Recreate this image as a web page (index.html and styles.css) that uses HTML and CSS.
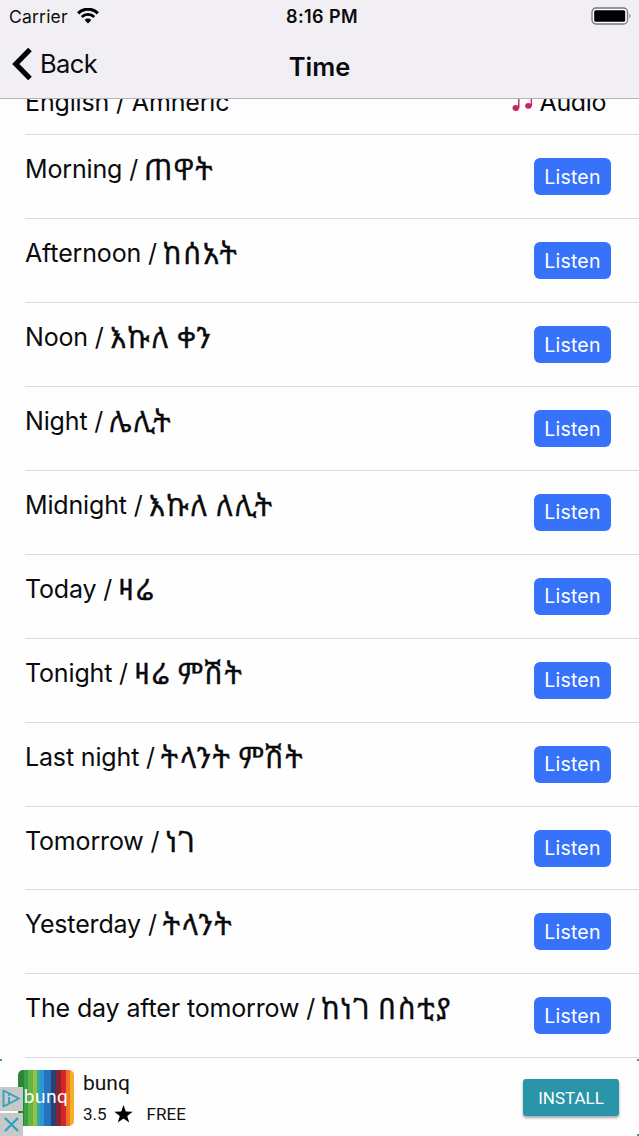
FILE: index.html
```
<!DOCTYPE html>
<html lang="en">
<head>
    <meta charset="UTF-8">
    <meta name="viewport" content="width=device-width, initial-scale=1.0">
    <title>Time</title>
    <link rel="stylesheet" href="styles.css">
</head>
<body>
    <header>
        <div class="status-bar">
            <div class="carrier">
                <span>Carrier</span>
                <svg width="22" height="16" viewBox="0 0 22 16">
                    <path d="M1.2 5.300a13.800 13.800 0 0 1 19.600 0" fill="none" stroke="#000" stroke-width="3.200"/>
                    <path d="M4.800 9a8.800 8.800 0 0 1 12.400 0" fill="none" stroke="#000" stroke-width="2.800"/>
                    <path d="M11 15.400l-3.400-3.400a4.800 4.800 0 0 1 6.800 0z"/>
                </svg>
            </div>
            <div class="clock">8:16 PM</div>
            <div class="battery">
                <svg width="41" height="19" viewBox="0 0 41 19">
                    <rect x="1" y="1" width="35.5" height="16" rx="4" fill="#fff" stroke="#77767a" stroke-width="1.3"/>
                    <rect x="3.2" y="3.2" width="31" height="11.600" rx="1.5"/>
                    <path d="M38.3 6.5q2.4 2.4 0 5z" fill="#77767a"/>
                </svg>
            </div>
        </div>
        <nav class="nav-bar">
            <a class="back">
                <svg width="21" height="34" viewBox="0 0 21 34">
                    <path d="M18 2.500L3.800 17 18 31.500" fill="none" stroke="#000" stroke-width="5.200"/>
                </svg>
                <span>Back</span>
            </a>
            <h1>Time</h1>
        </nav>
    </header>

    <main>
        <ul class="word-list">
            <li class="list-head">
                <span class="english">English / Amheric</span>
                <span class="audio">
                    <svg width="22" height="22" viewBox="0 0 22 22">
                        <path d="M6.800 18V3l12.600-2v15" fill="none" stroke="#c8265e" stroke-width="1.400"/>
                        <ellipse cx="3.800" cy="18" rx="3.300" ry="2.900" fill="#c8265e"/>
                        <ellipse cx="16.400" cy="15.800" rx="3.300" ry="2.900" fill="#c8265e"/>
                    </svg>
                    Audio
                </span>
            </li>
            <li><p><span class="english">Morning /</span> <span class="amharic" lang="am">ጠዋት</span></p><button>Listen</button></li>
            <li><p><span class="english">Afternoon /</span> <span class="amharic" lang="am">ከሰአት</span></p><button>Listen</button></li>
            <li><p><span class="english">Noon /</span> <span class="amharic" lang="am">እኩለ ቀን</span></p><button>Listen</button></li>
            <li><p><span class="english">Night /</span> <span class="amharic" lang="am">ሌሊት</span></p><button>Listen</button></li>
            <li><p><span class="english">Midnight /</span> <span class="amharic" lang="am">እኩለ ለሊት</span></p><button>Listen</button></li>
            <li><p><span class="english">Today /</span> <span class="amharic" lang="am">ዛሬ</span></p><button>Listen</button></li>
            <li><p><span class="english">Tonight /</span> <span class="amharic" lang="am">ዛሬ ምሽት</span></p><button>Listen</button></li>
            <li><p><span class="english">Last night /</span> <span class="amharic" lang="am">ትላንት ምሽት</span></p><button>Listen</button></li>
            <li><p><span class="english">Tomorrow /</span> <span class="amharic" lang="am">ነገ</span></p><button>Listen</button></li>
            <li><p><span class="english">Yesterday /</span> <span class="amharic" lang="am">ትላንት</span></p><button>Listen</button></li>
            <li><p><span class="english">The day after tomorrow /</span> <span class="amharic" lang="am">ከነገ በስቲያ</span></p><button>Listen</button></li>
        </ul>
    </main>

    <footer class="ad">
        <div class="app-icon"><span>bunq</span></div>
        <div class="ad-badges">
            <svg width="23" height="24" viewBox="0 0 23 24">
                <path d="M3.500 3.500v16L19 11.500z" fill="none" stroke="#2ba3bd" stroke-width="1.800" stroke-linejoin="round"/>
                <path d="M9 10v6M9 7v1.800" stroke="#2ba3bd" stroke-width="1.800"/>
            </svg>
            <svg width="23" height="23" viewBox="0 0 23 23">
                <path d="M5 5l13 13M18 5L5 18" stroke="#2ba3bd" stroke-width="2.200"/>
            </svg>
        </div>
        <div class="app-info">
            <div class="app-name">bunq</div>
            <div class="app-meta">
                <span>3.5</span>
                <svg width="19" height="18" viewBox="0 0 19 18">
                    <path d="M9.500 0l2.300 6.500 6.900.2-5.500 4.200 2 6.700-5.700-4-5.700 4 2-6.700L.3 6.700l6.900-.2z"/>
                </svg>
                <span>FREE</span>
            </div>
        </div>
        <button class="install">INSTALL</button>
    </footer>
</body>
</html>
```

FILE: styles.css
```
/* General */
* { box-sizing: border-box; }
body { margin: 0; height: 1136px; display: flex; flex-direction: column; overflow: hidden; background: #fefefe; color: #0b0b0e; font-family: Inter, "Noto Sans", "Noto Sans Ethiopic", sans-serif; }
button { border: 0; padding: 0; font-family: inherit; color: #fff; }
svg { display: block; flex: none; }

/* Header */
header { flex: none; height: 99px; background: #f1eff3; border-bottom: 1px solid #b5b4b8; }
.status-bar { height: 32px; display: grid; grid-template-columns: 1fr auto 1fr; align-items: center; padding: 0 7px 0 9px; }
.carrier { display: flex; align-items: center; gap: 9px; font-size: 17.5px; letter-spacing: 0.2px; }
.clock { font-size: 18px; font-weight: 600; letter-spacing: 0.4px; padding-left: 3px; }
.battery { justify-self: end; }
.nav-bar { height: 66px; display: grid; grid-template-columns: 1fr auto 1fr; align-items: center; padding: 0 12px; }
.back { display: flex; align-items: center; gap: 7px; font-size: 25.5px; letter-spacing: -0.6px; padding-bottom: 3px; }
h1 { margin: 0; font-size: 25.5px; font-weight: 600; letter-spacing: 0; padding-top: 3px; }

/* Word list */
main { flex: none; height: 960px; overflow: hidden; }
.word-list { list-style: none; margin: -47.5px 0 0 25px; padding: 0; }
.word-list li { display: flex; justify-content: space-between; align-items: flex-start; height: 83.9px; padding: 16px 28px 0 0; border-bottom: 1px solid #dcdbe0; font-size: 25px; letter-spacing: -0.15px; line-height: 36px; }
.word-list p { margin: 0; white-space: nowrap; }
.amharic { font-size: 29px; line-height: 1; letter-spacing: 1.7px; word-spacing: -3px; vertical-align: -2px; margin-left: -1px; -webkit-text-stroke: 0.3px #0b0b0e; }
.word-list .list-head { padding: 32px 33px 0 0; }
.audio { display: flex; align-items: center; gap: 5px; letter-spacing: -0.4px; }
.audio svg { margin: -1px 1px 0 0; }
.word-list button { width: 77px; height: 37px; margin-top: 7px; border-radius: 6px; background: #3772fb; font-size: 19.5px; letter-spacing: 0.2px; }

/* Ad banner */
.ad { position: relative; flex: 1; display: flex; align-items: center; padding: 0 20px 0 18px; font-family: Roboto, sans-serif; color: #111; }
.ad::before, .ad::after { content: ""; position: absolute; top: 0; width: 2px; height: 2px; background: #2ba38f; }
.ad::before { left: 0; }
.ad::after { right: 0; box-shadow: 0 75px #2ba38f; }
.app-icon { width: 56px; height: 56px; border-radius: 5px; display: flex; align-items: center; justify-content: center; background: linear-gradient(90deg, #2b8437 0 10%, #3aa043 10% 18%, #65b345 18% 27%, #8dc442 27% 34%, #35a8a0 34% 40%, #2998d6 40% 47%, #2771be 47% 59%, #254277 59% 68%, #852630 68% 76%, #d4252d 76% 85%, #ef7327 85% 93%, #f5ae29 93%); color: #fff; font: 19px Lato, sans-serif; letter-spacing: 0.5px; }
.app-icon span { position: relative; top: -2px; }
.ad-badges { position: absolute; left: 0; bottom: 0; width: 23px; display: grid; gap: 2px; }
.ad-badges svg { background: #c8c8c8; }
.app-info { flex: 1; padding: 0 0 2px 9px; }
.app-name { font-size: 21px; line-height: 26px; }
.app-meta { display: flex; align-items: center; gap: 7px; margin-top: 8px; font-size: 17px; line-height: 20px; }
.app-meta svg + span { padding-left: 7px; }
.install { width: 96px; height: 37px; border-radius: 3px; background: #2a94a8; font-size: 17px; box-shadow: 0 2px 3px rgba(0, 0, 0, 0.35); }
```
